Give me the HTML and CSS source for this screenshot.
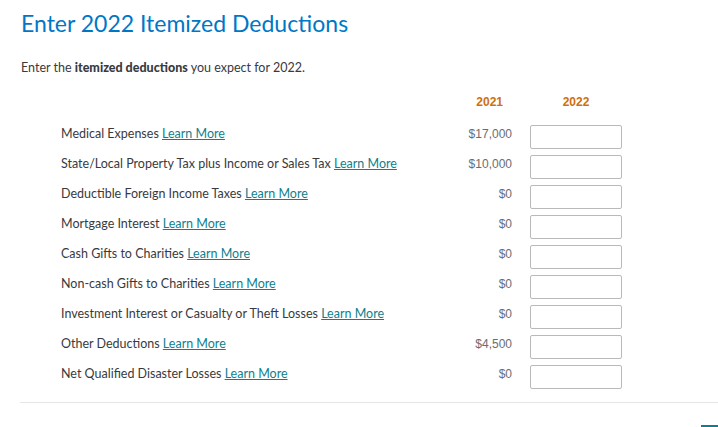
FILE: index.html
```html
<!DOCTYPE html>
<html lang="en">
<head>
<meta charset="utf-8">
<title>Enter 2022 Itemized Deductions</title>
<link rel="stylesheet" href="styles.css">
</head>
<body>
<main class="page">
  <h1 class="title">Enter 2022 Itemized Deductions</h1>
  <p class="intro">Enter the <strong>itemized deductions</strong> you expect for 2022.</p>
  <div class="grid">
    <div class="head-spacer"></div>
    <div class="head head-2021">2021</div>
    <div class="head head-2022">2022</div>

    <div class="label">Medical Expenses <a href="#">Learn More</a></div>
    <div class="amount">$17,000</div>
    <input class="field" type="text" aria-label="Medical Expenses 2022">

    <div class="label">State/Local Property Tax plus Income or Sales Tax <a href="#">Learn More</a></div>
    <div class="amount">$10,000</div>
    <input class="field" type="text" aria-label="State/Local Tax 2022">

    <div class="label">Deductible Foreign Income Taxes <a href="#">Learn More</a></div>
    <div class="amount">$0</div>
    <input class="field" type="text" aria-label="Foreign Income Taxes 2022">

    <div class="label">Mortgage Interest <a href="#">Learn More</a></div>
    <div class="amount">$0</div>
    <input class="field" type="text" aria-label="Mortgage Interest 2022">

    <div class="label">Cash Gifts to Charities <a href="#">Learn More</a></div>
    <div class="amount">$0</div>
    <input class="field" type="text" aria-label="Cash Gifts 2022">

    <div class="label">Non-cash Gifts to Charities <a href="#">Learn More</a></div>
    <div class="amount">$0</div>
    <input class="field" type="text" aria-label="Non-cash Gifts 2022">

    <div class="label">Investment Interest or Casualty or Theft Losses <a href="#">Learn More</a></div>
    <div class="amount">$0</div>
    <input class="field" type="text" aria-label="Investment Interest 2022">

    <div class="label">Other Deductions <a href="#">Learn More</a></div>
    <div class="amount">$4,500</div>
    <input class="field" type="text" aria-label="Other Deductions 2022">

    <div class="label">Net Qualified Disaster Losses <a href="#">Learn More</a></div>
    <div class="amount">$0</div>
    <input class="field" type="text" aria-label="Disaster Losses 2022">
  </div>
  <hr class="divider">
  <div class="actions"><span class="btn"></span></div>
</main>
</body>
</html>
```

FILE: styles.css
```css
html, body {
  margin: 0;
  padding: 0;
  background: #fff;
}
body {
  font-family: Lato, "Noto Sans", Arial, sans-serif;
  color: #393a3d;
  overflow: hidden;
}
.page {
  padding: 9px 0 0 20px;
}
.title {
  margin: 0 0 0 1px;
  font-weight: 400;
  font-size: 23px;
  line-height: 28px;
  color: #0077c5;
}
.intro {
  margin: 23px 0 0 1px;
  font-size: 12.5px;
  line-height: 16px;
}
.intro strong {
  font-weight: 900;
}
.grid {
  display: grid;
  grid-template-columns: 1fr 70px 92px;
  grid-template-rows: auto;
  grid-auto-rows: 30px;
  column-gap: 18px;
  width: 561px;
  margin: 19px 0 0 41px;
  align-items: center;
}
.head {
  font-family: "Liberation Sans", Arial, sans-serif;
  font-weight: 700;
  font-size: 12px;
  line-height: 14px;
  color: #cf700e;
  margin-bottom: 10px;
}
.head-2021 {
  text-align: right;
  padding-right: 9px;
}
.head-2022 {
  text-align: center;
}
.label {
  font-size: 12.5px;
  line-height: 16px;
}
.label a {
  color: #0d7f8e;
  text-decoration: underline;
}
.amount {
  font-family: "Liberation Sans", Arial, sans-serif;
  font-size: 12px;
  color: #6b6c72;
  text-align: right;
}
.field {
  box-sizing: border-box;
  align-self: start;
  width: 92px;
  height: 24px;
  margin: 6px 0 0 0;
  border: 1px solid #b9b9b9;
  border-radius: 2px;
  background: #fff;
  padding: 0 6px;
}
.divider {
  margin: 13px 0 0 0;
  border: 0;
  border-top: 1px solid #e6e6e6;
  height: 0;
}
.actions {
  display: flex;
  justify-content: flex-end;
  padding-top: 22px;
}
.btn {
  display: block;
  width: 17px;
  height: 2px;
  background: #0d7f8e;
}
```
